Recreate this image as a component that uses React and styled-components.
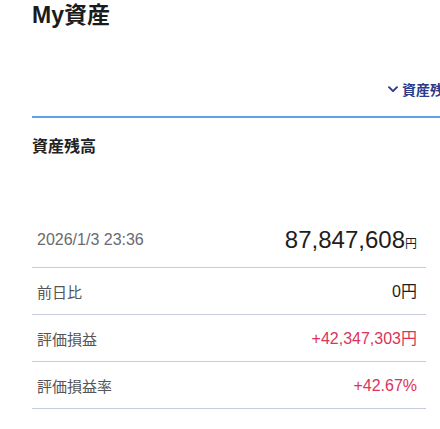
import styled, { createGlobalStyle } from 'styled-components';

const jp = `"Noto Sans CJK JP", "Liberation Sans", sans-serif`;

const GlobalStyle = createGlobalStyle`
  body {
    margin: 0;
    background: #fff;
    overflow: hidden;
    font-family: "Liberation Sans", "Noto Sans CJK JP", sans-serif;
    color: #222;
  }
`;

const rows = [
  { label: '前日比', value: '0', unit: '円', tone: 'plain' },
  { label: '評価損益', value: '+42,347,303', unit: '円', tone: 'up' },
  { label: '評価損益率', value: '+42.67%', unit: '', tone: 'up' },
];

const Chevron = () => (
  <svg width="10" height="7" viewBox="0 0 10 7" fill="none">
    <path d="M1 1.2L5 5.2L9 1.2" stroke="currentColor" strokeWidth="1.9" strokeLinecap="round" strokeLinejoin="round" />
  </svg>
);

const App = () => {
  return (
    <Page>
      <GlobalStyle />
      <Title>
        My<Jp>資産</Jp>
      </Title>
      <TabBar>
        <TabLink>
          <Chevron />
          <Jp>資産残高</Jp>
        </TabLink>
      </TabBar>
      <Heading>資産残高</Heading>
      <Table>
        <TotalRow>
          <DateText>2026/1/3 23:36</DateText>
          <Total>
            87,847,608<Yen $small>円</Yen>
          </Total>
        </TotalRow>
        {rows.map((row) => (
          <Row key={row.label}>
            <Label>{row.label}</Label>
            <Value $tone={row.tone}>
              {row.value}
              {row.unit && <Yen>{row.unit}</Yen>}
            </Value>
          </Row>
        ))}
      </Table>
    </Page>
  );
};

const Page = styled.div`
  width: 426px;
  padding-left: 32px;
`;

const Jp = styled.span`
  font-family: ${jp};
  line-height: 1;
`;

const Yen = styled.span`
  font-family: ${jp};
  line-height: 1;
  font-size: ${(p) => (p.$small ? '12px' : 'inherit')};
`;

const Title = styled.h1`
  margin: 0;
  font-size: 23px;
  line-height: 30px;
  font-weight: 700;
  color: #1b1b1b;
`;

const TabBar = styled.div`
  display: flex;
  justify-content: flex-end;
  margin-top: 49px;
  padding-bottom: 17px;
  border-bottom: 2px solid #5ea2ea;
`;

const TabLink = styled.a`
  display: flex;
  align-items: center;
  gap: 4px;
  height: 20px;
  font-size: 14px;
  font-weight: 700;
  color: #2b3a8a;
  white-space: nowrap;
`;

const Heading = styled.h2`
  margin: 15px 0 0;
  font-family: ${jp};
  font-size: 16px;
  line-height: 24px;
  font-weight: 700;
  color: #222;
`;

const Table = styled.div`
  width: 394px;
  margin-top: 56px;
`;

const Row = styled.div`
  display: flex;
  align-items: center;
  justify-content: space-between;
  height: 46px;
  padding: 1px 9px 0 5px;
  box-sizing: border-box;
  border-bottom: 1px solid #c6cdd9;
  & + & {
    height: 47px;
  }
`;

const TotalRow = styled(Row)`
  height: 55px;
  padding-top: 0;
`;

const DateText = styled.span`
  font-size: 16px;
  color: #6a6a6f;
`;

const Total = styled.span`
  font-size: 24px;
  color: #1e1e1e;
`;

const Label = styled.span`
  font-family: ${jp};
  font-size: 15px;
  color: #555;
`;

const Value = styled.span`
  font-size: 16px;
  color: ${(p) => (p.$tone === 'up' ? '#dc3358' : '#1e1e1e')};
`;

export default App;
